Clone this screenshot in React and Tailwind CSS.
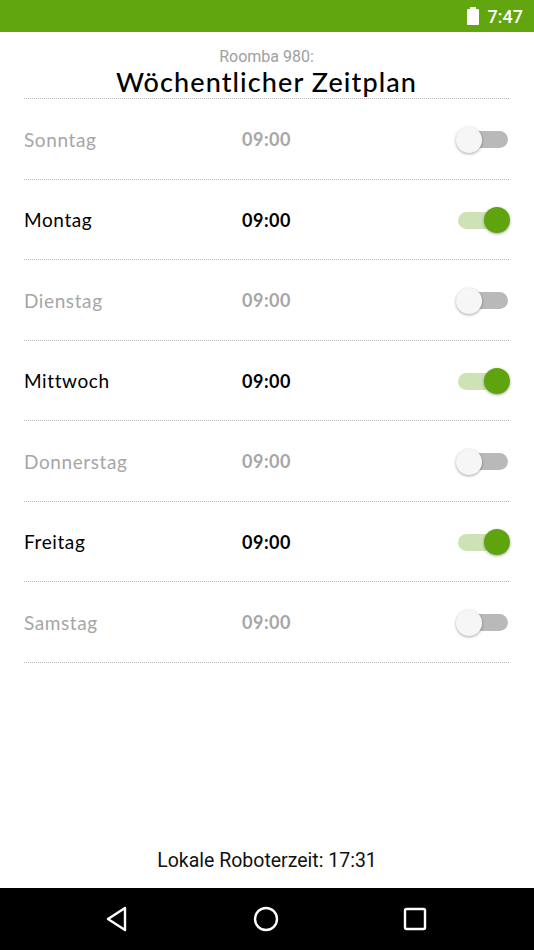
import React from "react";

const days = [
  ["Sonntag", false],
  ["Montag", true],
  ["Dienstag", false],
  ["Mittwoch", true],
  ["Donnerstag", false],
  ["Freitag", true],
  ["Samstag", false],
];

function Toggle({ on }) {
  return (
    <div className="relative w-[50px] h-[26px] flex items-center">
      <div
        className={
          "absolute left-0 right-0 h-[17px] rounded-full " +
          (on ? "bg-[#cde3b5]" : "bg-[#b9b9b9]")
        }
      />
      <div
        className={
          "absolute top-0 w-[26px] h-[26px] rounded-full shadow-[0_1px_3px_rgba(0,0,0,0.35)] " +
          (on ? "right-[-2px] bg-[#5fa30f]" : "left-[-2px] bg-[#f6f6f6]")
        }
      />
    </div>
  );
}

export default function App() {
  return (
    <div className="w-[534px] h-[950px] flex flex-col bg-white overflow-hidden">
      <div className="h-[32px] bg-[#61a60e] flex items-center justify-end pr-[11px] shrink-0">
        <svg width="14" height="18" viewBox="0 0 14 18" className="mr-[8px]">
          <rect x="4" y="0" width="6" height="2" fill="white" />
          <rect x="1" y="2" width="12" height="16" rx="1" fill="white" />
        </svg>
        <span className="text-white text-[18px] font-medium" style={{ fontFamily: "Roboto, sans-serif" }}>
          7:47
        </span>
      </div>
      <div className="flex-1 px-[24px] pr-[25px]">
        <div className="h-[67px] flex flex-col items-center pt-[16px] border-b border-dotted border-[#b8b8b8]">
          <div className="text-[16px] leading-[18px] text-[#a0a0a0]" style={{ fontFamily: "Roboto, sans-serif" }}>
            Roomba 980:
          </div>
          <div
            className="text-[27px] leading-[31px] tracking-[1.1px] text-black font-medium"
            style={{ fontFamily: "Lato, sans-serif" }}
          >
            Wöchentlicher Zeitplan
          </div>
        </div>
        {days.map(([name, on]) => (
          <div
            key={name}
            className="h-[80.5px] flex items-center pt-[2px] border-b border-dotted border-[#b8b8b8]"
            style={{ fontFamily: "Lato, sans-serif" }}
          >
            <div className={"w-[218px] text-[19px] tracking-[0.6px] " + (on ? "text-black" : "text-[#a6a6a6]")}>
              {name}
            </div>
            <div className={"flex-1 text-[18px] tracking-[0.5px] font-bold " + (on ? "text-black" : "text-[#a6a6a6]")}>
              09:00
            </div>
            <div className="pr-[1px]">
              <Toggle on={on} />
            </div>
          </div>
        ))}
      </div>
      <div
        className="h-[42px] flex items-start justify-center text-[19.5px] text-[#111] shrink-0"
        style={{ fontFamily: "Roboto, sans-serif" }}
      >
        Lokale Roboterzeit: 17:31
      </div>
      <div className="h-[62px] bg-black flex items-center justify-center gap-[124px] shrink-0">
        <svg width="24" height="26" viewBox="0 0 24 26" className="ml-[-2px]">
          <path d="M20 2 L3 13 L20 24 Z" fill="none" stroke="white" strokeWidth="2.4" strokeLinejoin="round" />
        </svg>
        <svg width="26" height="26" viewBox="0 0 26 26">
          <circle cx="13" cy="13" r="11" fill="none" stroke="white" strokeWidth="2.4" />
        </svg>
        <svg width="24" height="24" viewBox="0 0 24 24">
          <rect x="2" y="2" width="20" height="20" rx="1.5" fill="none" stroke="white" strokeWidth="2.4" />
        </svg>
      </div>
    </div>
  );
}
